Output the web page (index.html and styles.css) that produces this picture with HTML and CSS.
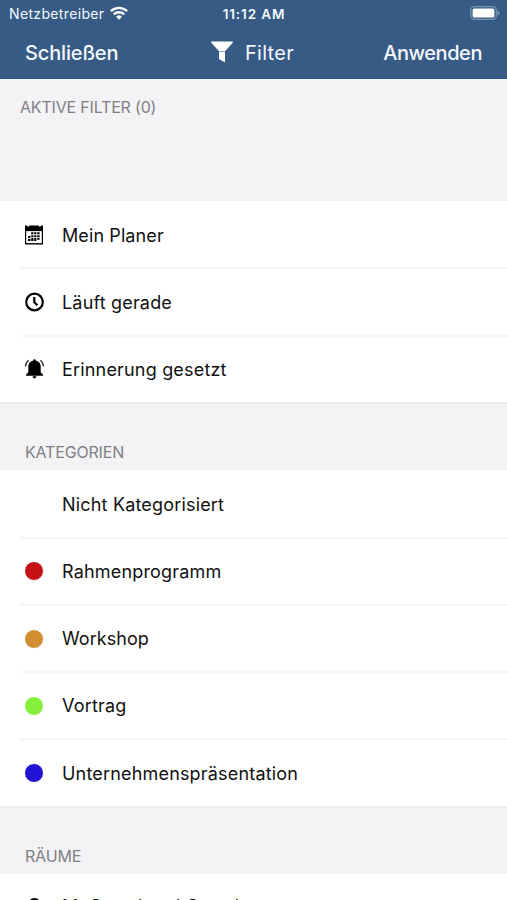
FILE: index.html
```html
<!DOCTYPE html>
<html lang="de">
<head>
<meta charset="utf-8">
<title>Filter</title>
<link rel="stylesheet" href="styles.css">
</head>
<body>
<header class="top">
  <div class="status">
    <div class="carrier"><span class="carrier-name">Netzbetreiber</span>
      <svg class="wifi" viewBox="0 0 18 14" width="18" height="14"><g fill="none" stroke="#fff" stroke-width="2.4"><path d="M.9 5.2a11.5 11.5 0 0 1 16.2 0"/><path d="M3.8 8.4a7.4 7.4 0 0 1 10.4 0"/></g><path fill="#fff" d="M9 13.8 6.1 10.8a4.1 4.1 0 0 1 5.800 0z"/></svg>
    </div>
    <span class="time">11:12 AM</span>
    <svg class="battery" viewBox="0 0 31 14" width="31" height="14"><rect x="1.7" y=".7" width="25.6" height="12.6" rx="3.6" fill="none" stroke="#7b95b3" stroke-width="1.2"/><rect x="3.6" y="2.4" width="21.8" height="9.2" rx="1.6" fill="#fff"/><path fill="#7b95b3" d="M28.4 4.6q2.200.7 2.200 2.400t-2.200 2.400z"/></svg>
  </div>
  <nav class="bar">
    <span class="close">Schließen</span>
    <span class="title"><svg viewBox="0 0 22 22" width="22" height="22" fill="#fff"><path d="M.3.5h21.4v1.200L14 10.300H8L.3 1.700z"/><path d="M8 10.800h6v10.700l-6-3.400z"/></svg><span class="title-text">Filter</span></span>
    <span class="apply">Anwenden</span>
  </nav>
</header>
<main>
  <h2 class="active">AKTIVE FILTER (0)</h2>
  <ul class="list">
    <li><svg class="icon" viewBox="0 0 20 20" width="20" height="20"><path d="M1 .5h2.200v1h2v-1h9.600v1h2v-1H19v18.900H1z"/><path fill="#fff" d="M2.200 6.100h15.600v12H2.200z"/><path d="M7.200 7.300h2.200v2H7.200zm3 0h2.200v2h-2.200zm3 0h2.400v2h-2.400zM7.200 10.200h2.200v2H7.200zm3 0h2.200v2h-2.200zm3 0h2.400v2h-2.400zM4 11h2.400v1.800H4zM4 13.800h2.400v2.200H4zm3.200-.7h2.200V16H7.200zm3 0h2.200V16h-2.200zm3 0h2.400v1.600h-2.400z"/></svg><span class="label planer">Mein Planer</span></li>
    <li><svg class="icon" viewBox="0 0 20 20" width="20" height="20" fill="none" stroke="#000" stroke-width="2.2"><circle cx="10.500" cy="10" r="8.300"/><path d="M10.300 5v5.300l3.200 3"/></svg><span class="label">Läuft gerade</span></li>
    <li><svg class="icon" viewBox="0 0 20 20" width="20" height="20"><path d="M9.200 1.500a1.300 1.300 0 0 1 2.600 0c3.400.8 4.900 3.200 4.900 6.100v5.300l2.400 3v.8H1.900v-.8l2.400-3V7.600c0-2.900 1.500-5.300 4.900-6.100zM8.400 17.300h4.200q-.3 2.100-2.100 2.100t-2.100-2.100z"/><path fill="none" stroke="#222" stroke-width="1.200" d="M4.600 1.200Q1.600 3.600 1.400 7.500M16.400 1.200q3 2.400 3.200 6.300"/></svg><span class="label">Erinnerung gesetzt</span></li>
  </ul>
  <h2 class="group">KATEGORIEN</h2>
  <ul class="list">
    <li><span class="icon"></span><span class="label nicht">Nicht Kategorisiert</span></li>
    <li><span class="icon dot red"></span><span class="label">Rahmenprogramm</span></li>
    <li><span class="icon dot orange"></span><span class="label workshop">Workshop</span></li>
    <li><span class="icon dot green"></span><span class="label">Vortrag</span></li>
    <li><span class="icon dot blue"></span><span class="label">Unternehmenspräsentation</span></li>
  </ul>
  <h2 class="group">RÄUME</h2>
  <ul class="list">
    <li class="room"><svg class="icon" viewBox="0 0 20 20" width="20" height="20"><path fill-rule="evenodd" d="M10.500 0a6.500 6.500 0 0 1 6.500 6.500c0 5-6.500 12.500-6.500 12.500S4 11.500 4 6.500A6.500 6.500 0 0 1 10.500 0zm0 4.200a2.400 2.400 0 1 0 0 4.800 2.400 2.400 0 0 0 0-4.800z"/></svg><span class="label">M. Grund und Grund</span></li>
  </ul>
</main>
</body>
</html>
```
FILE: styles.css
```css
* { box-sizing: border-box; }
html, body { height: 900px; overflow: hidden; }
body { margin: 0; background: #f3f3f6; color: #111; font-family: Inter, "Liberation Sans", sans-serif; }
svg { display: block; flex: none; }
.top { height: 79px; background: #375b85; color: #f4f8ff; border-bottom: 1px solid #31547d; }
.status { height: 27px; padding: 0 7px 0 9px; display: grid; grid-template-columns: 1fr auto 1fr; align-items: center; }
.carrier { display: flex; align-items: center; gap: 6px; font-size: 14px; letter-spacing: .35px; }
.wifi { margin-top: -2px; }
.time { font-size: 13.5px; font-weight: 600; letter-spacing: .9px; margin-right: 1px; }
.battery { justify-self: end; margin-top: -1px; }
.bar { height: 51px; padding: 0 25px; display: grid; grid-template-columns: 1fr auto 1fr; align-items: center; font-size: 20px; }
.close, .apply { font-weight: 500; }
.close { letter-spacing: -.15px; }
.apply { justify-self: end; letter-spacing: -.45px; }
.title { display: flex; align-items: center; gap: 12px; margin-right: 2px; }
.title-text { letter-spacing: .3px; }
.title svg { margin-top: -2px; }
h2 { margin: 0; font-size: 16px; font-weight: 400; line-height: 20px; letter-spacing: -.18px; color: #808083; }
.active { height: 122px; padding: 18px 20px; }
.group { height: 68.6px; padding: 38.4px 25px 0; border-top: 2px solid #ececee; }
.list { margin: 0; padding: 0; list-style: none; background: #fff; }
.list li { height: 66.4px; margin-left: 20px; padding: 2px 0 0 4px; display: flex; align-items: center; gap: 18px; }
.list li + li { height: 67.2px; padding-top: 0; border-top: 2px solid #f5f5f6; }
.list .room { height: 67px; padding-top: 0; }
.icon { width: 20px; height: 20px; flex: none; }
.dot { border: 1px solid #fff; border-radius: 50%; }
.red { background: #c51113; }
.orange { background: #d18f32; }
.green { background: #86ee3d; }
.blue { background: #2113d3; }
.label { padding-top: 1.4px; font-size: 18px; line-height: 24px; letter-spacing: .18px; white-space: nowrap; }
.list .nicht { padding-top: 0; }
.room .label { padding: 0 0 2px; }
.planer { letter-spacing: .1px; }
.workshop { letter-spacing: .05px; }
```
